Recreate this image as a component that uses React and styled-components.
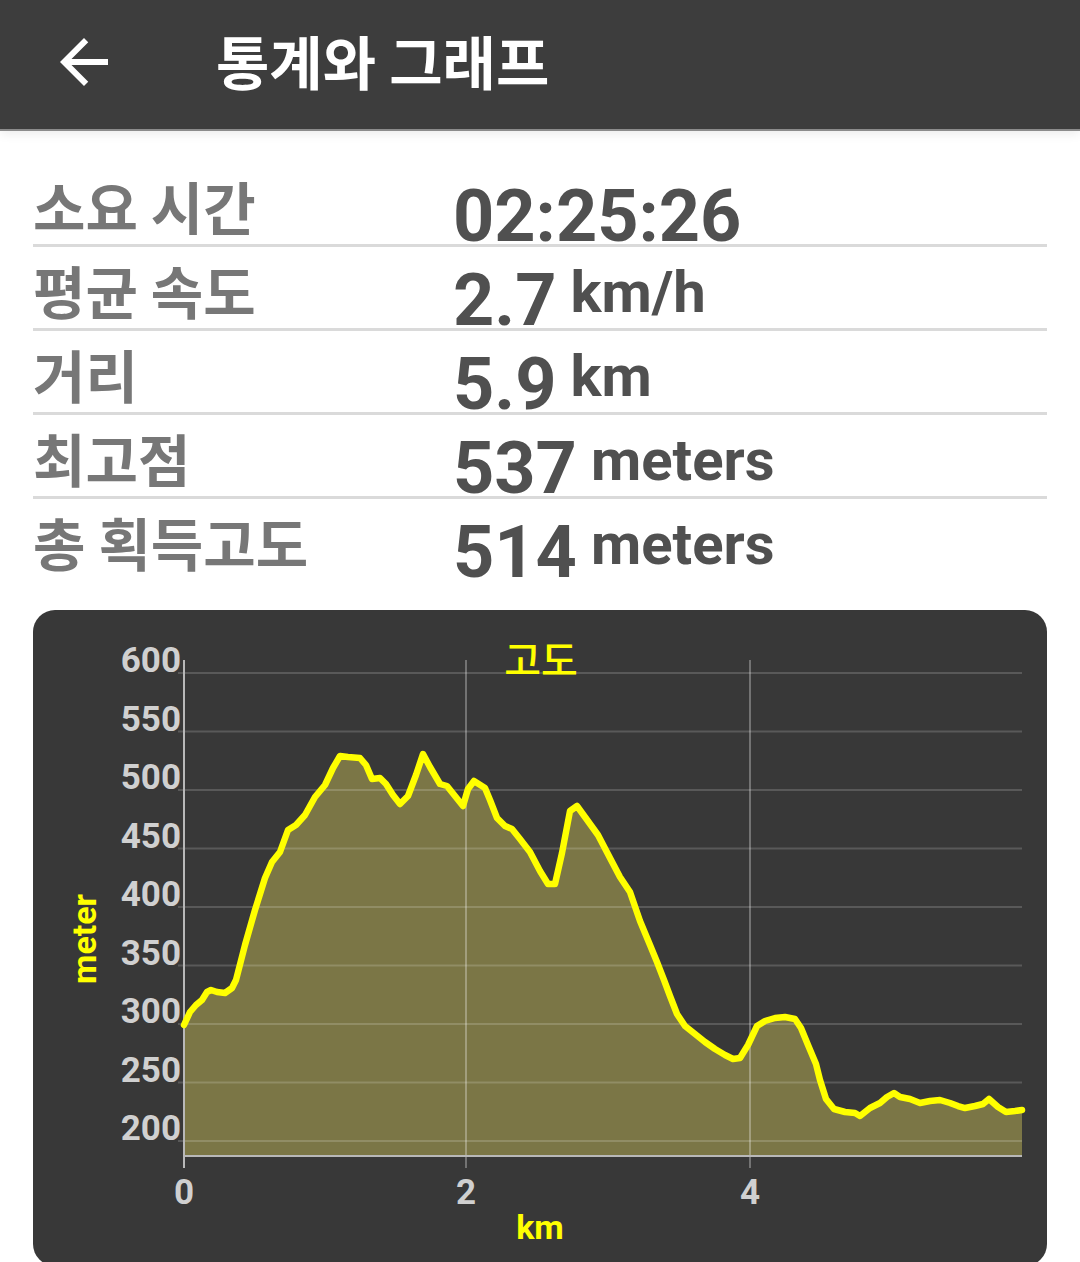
import styled, { createGlobalStyle } from 'styled-components';

const GlobalStyle = createGlobalStyle`
  html, body {
    margin: 0;
    padding: 0;
    background: #ffffff;
  }
  body {
    width: 1080px;
    height: 1262px;
    overflow: hidden;
    font-family: Roboto, "Noto Sans CJK KR", sans-serif;
  }
`;

const Page = styled.div`
  display: flex;
  flex-direction: column;
  height: 1262px;
`;

const Header = styled.header`
  height: 129px;
  background: #3d3d3d;
  border-bottom: 2px solid #8c8c8c;
  box-shadow: 0 3px 10px rgba(0, 0, 0, 0.08);
  display: flex;
  align-items: center;
  flex-shrink: 0;
`;

const BackButton = styled.button`
  width: 72px;
  height: 72px;
  margin: -6px 0 0 48px;
  padding: 0;
  border: none;
  background: none;
  display: flex;
`;

const Title = styled.h1`
  margin: -9px 0 0 96px;
  font-family: "Noto Sans CJK KR", sans-serif;
  font-weight: 700;
  font-size: 58px;
  line-height: 1;
  color: #ffffff;
`;

const Stats = styled.section`
  padding: 32px 33px 0;
  display: flex;
  flex-direction: column;
`;

const Row = styled.div`
  height: 81px;
  display: flex;
  align-items: flex-start;
  border-bottom: 3px solid ${({ $last }) => ($last ? 'transparent' : '#dadada')};
`;

const Label = styled.div`
  width: 422px;
  margin-top: 14px;
  font-family: "Noto Sans CJK KR", sans-serif;
  font-weight: 700;
  font-size: 57px;
  line-height: 1;
  color: #777777;
  white-space: nowrap;
`;

const Value = styled.div`
  display: flex;
  align-items: flex-start;
  padding-top: 18px;
  margin-left: -2px;
  color: #505050;
  font-family: Roboto, sans-serif;
  font-weight: 700;
`;

const Number = styled.span`
  font-size: 72px;
  line-height: 1;
`;

const Unit = styled.span`
  margin-left: 14px;
  margin-top: -2px;
  font-size: 58px;
  line-height: 1;
  font-weight: 700;
`;

const ChartCard = styled.div`
  margin: 27px 33px 0;
  height: 656px;
  background: #383838;
  border-radius: 22px;
  overflow: hidden;
  flex-shrink: 0;
`;

const stats = [
  { label: '소요 시간', value: '02:25:26' },
  { label: '평균 속도', value: '2.7', unit: 'km/h' },
  { label: '거리', value: '5.9', unit: 'km' },
  { label: '최고점', value: '537', unit: 'meters' },
  { label: '총 획득고도', value: '514', unit: 'meters' },
];

// elevation trace, in page pixels
const trace = [
  [184, 1025], [190, 1012], [196, 1005], [202, 1000], [207, 992], [211, 990],
  [217, 992], [225, 993], [232, 988], [236, 980], [245, 945], [255, 910],
  [265, 878], [272, 862], [280, 852], [288, 830], [296, 825], [305, 815],
  [315, 797], [325, 785], [333, 768], [340, 756], [348, 757], [360, 758],
  [366, 765], [372, 779], [380, 778], [386, 784], [393, 795], [400, 804],
  [408, 796], [416, 775], [423, 754], [430, 767], [440, 784], [447, 786],
  [455, 796], [463, 806], [468, 789], [474, 781], [485, 788], [490, 800],
  [497, 818], [505, 826], [512, 829], [520, 839], [530, 852], [540, 871],
  [548, 884], [555, 884], [562, 853], [570, 811], [577, 806], [585, 817],
  [598, 835], [610, 858], [620, 877], [630, 892], [640, 921], [650, 945],
  [657, 962], [664, 980], [670, 996], [677, 1014], [685, 1026], [695, 1034],
  [705, 1042], [715, 1049], [725, 1055], [733, 1059], [740, 1058], [748, 1045],
  [757, 1026], [765, 1021], [775, 1018], [785, 1017], [795, 1019], [801, 1028],
  [808, 1045], [816, 1064], [820, 1080], [826, 1099], [834, 1109], [845, 1112],
  [855, 1113], [860, 1116], [870, 1108], [880, 1103], [887, 1097], [894, 1093],
  [900, 1097], [910, 1099], [920, 1103], [930, 1101], [940, 1100], [950, 1103],
  [958, 1106], [965, 1108], [975, 1106], [983, 1104], [989, 1099], [998, 1107],
  [1006, 1112], [1015, 1111], [1022, 1110],
];

const yTicks = [600, 550, 500, 450, 400, 350, 300, 250, 200];
const gridY = (i) => 673 + i * 58.5;
const xTicks = [
  { x: 184, label: '0' },
  { x: 466, label: '2' },
  { x: 750, label: '4' },
];

function ElevationChart() {
  const line = trace.map(([x, y], i) => `${i ? 'L' : 'M'}${x} ${y}`).join(' ');
  const area = `${line} L1022 1156 L184 1156 Z`;

  return (
    <svg width="1014" height="656" viewBox="33 610 1014 656">
      <path d={area} fill="#7b7646" />
      {yTicks.map((v, i) => (
        <g key={v}>
          <line x1="178" x2="1022" y1={gridY(i)} y2={gridY(i)} stroke="rgba(255,255,255,0.17)" strokeWidth="2" />
          <text
            x="181"
            y={gridY(i) - 1}
            textAnchor="end"
            fontFamily="Roboto, sans-serif"
            fontWeight="700"
            fontSize="35"
            fill="#d0d0d0"
          >
            {v}
          </text>
        </g>
      ))}
      {xTicks.map((t) => (
        <g key={t.label}>
          <line x1={t.x} x2={t.x} y1="660" y2="1168" stroke="rgba(255,255,255,0.4)" strokeWidth="1.5" />
          <text
            x={t.x}
            y="1204"
            textAnchor="middle"
            fontFamily="Roboto, sans-serif"
            fontWeight="700"
            fontSize="35"
            fill="#d0d0d0"
          >
            {t.label}
          </text>
        </g>
      ))}
      <line x1="184" x2="1022" y1="1156" y2="1156" stroke="#b8b8b8" strokeWidth="2" />
      <line x1="184" x2="184" y1="660" y2="1168" stroke="#b8b8b8" strokeWidth="2" />
      <path d={line} fill="none" stroke="#ffff00" strokeWidth="6.5" strokeLinejoin="round" strokeLinecap="round" />
      <text
        x="541"
        y="675"
        textAnchor="middle"
        fontFamily='"Noto Sans CJK KR", sans-serif'
        fontWeight="500"
        fontSize="40"
        fill="#ffff00"
      >
        고도
      </text>
      <text
        x="540"
        y="1239"
        textAnchor="middle"
        fontFamily="Roboto, sans-serif"
        fontWeight="700"
        fontSize="34"
        fill="#ffff00"
      >
        km
      </text>
      <text
        transform="translate(96 939) rotate(-90)"
        textAnchor="middle"
        fontFamily="Roboto, sans-serif"
        fontWeight="700"
        fontSize="34"
        fill="#ffff00"
      >
        meter
      </text>
    </svg>
  );
}

export default function App() {
  return (
    <Page>
      <GlobalStyle />
      <Header>
        <BackButton aria-label="back">
          <svg width="72" height="72" viewBox="0 0 24 24">
            <path fill="#ffffff" d="M20 11H7.83l5.59-5.59L12 4l-8 8 8 8 1.41-1.41L7.83 13H20v-2z" />
          </svg>
        </BackButton>
        <Title>통계와 그래프</Title>
      </Header>
      <Stats>
        {stats.map((s, i) => (
          <Row key={s.label} $last={i === stats.length - 1}>
            <Label>{s.label}</Label>
            <Value>
              <Number>{s.value}</Number>
              {s.unit && <Unit>{s.unit}</Unit>}
            </Value>
          </Row>
        ))}
      </Stats>
      <ChartCard>
        <ElevationChart />
      </ChartCard>
    </Page>
  );
}
